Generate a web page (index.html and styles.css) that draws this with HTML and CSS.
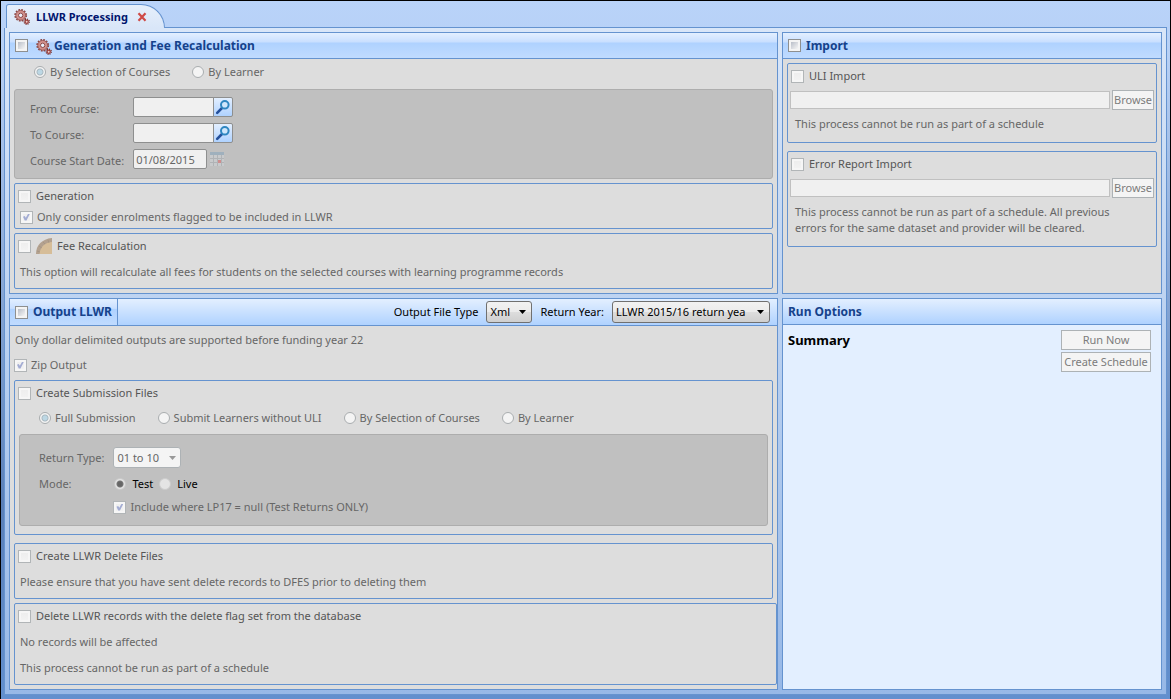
FILE: index.html
```
<!DOCTYPE html>
<html lang="en">
<head>
<meta charset="utf-8">
<title>LLWR Processing</title>
<link rel="stylesheet" href="styles.css">
</head>
<body>
<svg class="defs" aria-hidden="true">
  <symbol id="gears" viewBox="0 0 16 16">
    <circle cx="6.7" cy="6.3" r="5.6" fill="none" stroke="#8a4644" stroke-width="1.6" stroke-dasharray="1.7 1.22"/>
    <circle cx="6.7" cy="6.3" r="3.9" fill="#e9b3ae" stroke="#d08f8a" stroke-width="2.4"/>
    <circle cx="6.7" cy="6.3" r="4.9" fill="none" stroke="#8a4442" stroke-width=".7"/>
    <circle cx="6.7" cy="6.3" r="2.2" fill="#eaf0fb" stroke="#7d3432" stroke-width=".9"/>
    <circle cx="12.7" cy="12.7" r="2.6" fill="none" stroke="#6d2826" stroke-width="1.2" stroke-dasharray="1.1 .94"/>
    <circle cx="12.7" cy="12.7" r="1.6" fill="#f0cfcb" stroke="#9c403c" stroke-width="1.3"/>
  </symbol>
  <symbol id="lens" viewBox="0 0 16 16">
    <path d="M7 9L2.2 13.8" stroke="#24509c" stroke-width="2.6" stroke-linecap="round"/>
    <circle cx="9.8" cy="5.8" r="3.8" fill="#cfe6fb" stroke="#2e86c0" stroke-width="2"/>
  </symbol>
</svg>
<div class="window">
  <nav class="tabs">
    <div class="tab">
      <svg class="icon"><use href="#gears"/></svg>
      <span class="tab-title">LLWR Processing</span>
      <button class="close" aria-label="Close tab"><svg viewBox="0 0 10 10"><path d="M1.5 1.2L8.5 8.8M8.5 1.2L1.5 8.8" stroke="#cf4a46" stroke-width="2.2"/></svg></button>
    </div>
    <div class="tab-rest"></div>
  </nav>
  <main class="content">
    <section class="panel">
      <header class="panel-head glossy">
        <label class="heading"><input type="checkbox"><svg class="icon head-icon"><use href="#gears"/></svg><span>Generation and Fee Recalculation</span></label>
      </header>
      <div class="panel-body">
        <div class="radios radios-top">
          <label><input type="radio" name="scope" checked disabled>By Selection of Courses</label>
          <label><input type="radio" name="scope" disabled>By Learner</label>
        </div>
        <div class="well course-form">
          <label for="from">From Course:</label>
          <div class="field"><input class="text lookup" id="from" type="text" disabled><button class="find" aria-label="Find from course"><svg><use href="#lens"/></svg></button></div>
          <label for="to">To Course:</label>
          <div class="field"><input class="text lookup" id="to" type="text" disabled><button class="find" aria-label="Find to course"><svg><use href="#lens"/></svg></button></div>
          <label for="start">Course Start Date:</label>
          <div class="field"><input class="text date" id="start" type="text" value="01/08/2015" disabled><button class="calendar" aria-label="Pick date" disabled><svg viewBox="0 0 14 14"><path fill="#c8cacc" d="M0 0h14v14H0z"/><path fill="#9fb0bd" d="M0 0h14v3H0z"/><path d="M0 6.5h14M0 10.5h14M3.5 3v11M7.5 3v11M11.5 3v11" stroke="#b0b3b6" fill="none"/><path fill="#cf8d8d" d="M8 8h3v3H8z"/></svg></button></div>
        </div>
        <div class="group gap-s">
          <label class="title"><input type="checkbox" disabled>Generation</label>
          <label class="sub check"><input type="checkbox" checked disabled>Only consider enrolments flagged to be included in LLWR</label>
        </div>
        <div class="group gap-s">
          <label class="title"><input type="checkbox" disabled><svg class="fee" viewBox="0 0 16 16"><path d="M0 16C0 7 6 1 16 0V16Z" fill="#b3a18f"/><path d="M3.5 16C4 9 9 4.5 16 4V16Z" fill="#d6bd98"/><path d="M1 13l3 1M3 8l3 2M7 4l2 2M12 2l1 3" stroke="#a08e7c" stroke-width=".6"/></svg>Fee Recalculation</label>
          <p class="note">This option will recalculate all fees for students on the selected courses with learning programme records</p>
        </div>
      </div>
    </section>

    <section class="panel">
      <header class="panel-head glossy">
        <label class="heading"><input type="checkbox"><span>Import</span></label>
      </header>
      <div class="panel-body import">
        <div class="group">
          <label class="title"><input type="checkbox" disabled>ULI Import</label>
          <div class="file"><input class="text" type="text" aria-label="ULI file" disabled><button class="btn" disabled>Browse</button></div>
          <p class="note">This process cannot be run as part of a schedule</p>
        </div>
        <div class="group">
          <label class="title"><input type="checkbox" disabled>Error Report Import</label>
          <div class="file"><input class="text" type="text" aria-label="Error report file" disabled><button class="btn" disabled>Browse</button></div>
          <p class="note">This process cannot be run as part of a schedule. All previous errors for the same dataset and provider will be cleared.</p>
        </div>
      </div>
    </section>

    <section class="panel">
      <header class="panel-head output-head">
        <label class="heading boxed glossy"><input type="checkbox"><span>Output LLWR</span></label>
        <div class="options">
          <label for="type">Output File Type</label>
          <select id="type" class="type"><option>Xml</option></select>
          <label for="year">Return Year:</label>
          <select id="year" class="year"><option>LLWR 2015/16 return yea</option></select>
        </div>
      </header>
      <div class="panel-body output">
        <p class="lead">Only dollar delimited outputs are supported before funding year 22</p>
        <label class="check zip"><input type="checkbox" checked disabled>Zip Output</label>
        <div class="group submission">
          <label class="title"><input type="checkbox" disabled>Create Submission Files</label>
          <div class="radios">
            <label><input type="radio" name="files" checked disabled>Full Submission</label>
            <label><input type="radio" name="files" disabled>Submit Learners without ULI</label>
            <label><input type="radio" name="files" disabled>By Selection of Courses</label>
            <label><input type="radio" name="files" disabled>By Learner</label>
          </div>
          <div class="well mode-form">
            <label for="ret">Return Type:</label>
            <div class="field"><select id="ret" class="ret" disabled><option>01 to 10</option></select></div>
            <span>Mode:</span>
            <div class="modes">
              <label><input class="flat" type="radio" name="mode" checked disabled>Test</label>
              <label><input class="flat" type="radio" name="mode" disabled>Live</label>
            </div>
            <label class="check include"><input type="checkbox" checked disabled>Include where LP17 = null (Test Returns ONLY)</label>
          </div>
        </div>
        <div class="group gap-l">
          <label class="title"><input type="checkbox" disabled>Create LLWR Delete Files</label>
          <p class="note">Please ensure that you have sent delete records to DFES prior to deleting them</p>
        </div>
        <div class="group gap-s wide">
          <label class="title"><input type="checkbox" disabled>Delete LLWR records with the delete flag set from the database</label>
          <p class="note">No records will be affected</p>
          <p class="note">This process cannot be run as part of a schedule</p>
        </div>
      </div>
    </section>

    <section class="panel run">
      <header class="panel-head"><h2 class="heading">Run Options</h2></header>
      <div class="run-body">
        <h3 class="summary">Summary</h3>
        <div class="actions">
          <button class="btn" disabled>Run Now</button>
          <button class="btn" disabled>Create Schedule</button>
        </div>
      </div>
    </section>
  </main>
</div>
</body>
</html>
```
FILE: styles.css
```
* { box-sizing: border-box; }

body {
  margin: 0;
  font: 11px/16px "Noto Sans", "Open Sans", sans-serif;
  color: #666;
}

h2, h3, p { margin: 0; }
input, button, select { font: inherit; margin: 0; padding: 0; }
.defs { position: absolute; width: 0; height: 0; }

.window {
  min-height: 100vh;
  display: flex;
  flex-direction: column;
  border: 1px solid #000;
  padding: 0 3px 4px;
  background: linear-gradient(#b9d3f9 0, #b7d0f5 8%, #5a80b9 72%, #628fce 100%);
}

/* Tab strip */
.tabs { display: flex; align-items: flex-end; height: 27px; }
.tab {
  display: flex;
  align-items: center;
  height: 24px;
  margin-left: 2px;
  padding: 0 17px 0 7px;
  border: 1px solid #6593cf;
  border-bottom: 0;
  border-radius: 3px 26px 0 0;
  background: linear-gradient(#e6effb, #d9e6f8);
}
.tab-rest { flex: 1; border-bottom: 1px solid #6593cf; }
.tab-title { margin-left: 6px; color: #00156e; font-weight: 700; }
.icon { width: 16px; height: 16px; flex: none; }
.close { width: 10px; height: 10px; margin-left: 9px; border: 0; background: none; }
.close svg { display: block; width: 10px; height: 10px; }

.content {
  flex: 1;
  display: grid;
  grid-template-columns: minmax(0, 769fr) minmax(0, 380fr);
  grid-template-rows: auto 1fr;
  gap: 4px;
  padding: 4px;
  border: 1px solid #6593cf;
  border-top: 0;
  background: linear-gradient(#d9e6f8, #97b8e7);
}

/* Panels */
.panel {
  display: flex;
  flex-direction: column;
  border: 1px solid #6593cf;
  background: #ddd;
}
.panel-head {
  display: flex;
  align-items: center;
  height: 26px;
  padding: 0 5px;
  border-bottom: 1px solid #6593cf;
  background: linear-gradient(#e3efff, #afd2ff);
}
.glossy { background: linear-gradient(#e3efff 0, #c9dfff 36%, #afd2ff 40%, #c0dbff 100%); }
.heading {
  display: flex;
  align-items: center;
  color: #15428b;
  font-size: 12px;
  font-weight: 700;
}
.heading input { margin-right: 5px; }
.head-icon { margin: 3px 2px 0 3px; }
.panel-body { padding: 4px; }

label { display: flex; align-items: center; }

/* Tick boxes and radio buttons */
input[type="checkbox"] {
  appearance: none;
  flex: none;
  width: 13px;
  height: 13px;
  border: 1px solid #8e8f8f;
  background: linear-gradient(135deg, #b9bec8, #f6f6f6) content-box, #f4f4f4;
  padding: 2px;
}
input[type="checkbox"]:disabled {
  border-color: #b1b5b7;
  background: linear-gradient(#eee, #f2f2f2) content-box, #f6f6f6;
}
input[type="checkbox"]:checked::before {
  content: "";
  display: block;
  width: 7px;
  height: 7px;
  background: #a3acd3;
  clip-path: polygon(0 45%, 25% 35%, 40% 60%, 75% 0, 100% 0, 50% 100%, 25% 100%);
}
input[type="radio"] {
  appearance: none;
  flex: none;
  width: 12px;
  height: 12px;
  border: 1px solid #a9adaf;
  border-radius: 50%;
  background: #f4f4f4;
}
input[type="radio"]:checked {
  background: radial-gradient(circle, #bcd7e4 0 2px, #a9b8c0 3px, #f4f4f4 4px);
}
input[type="radio"].flat { border-color: #ccc; background: #e4e4e4; }
input[type="radio"].flat:checked { background: radial-gradient(circle, #666 0 2px, #777 3px, #e4e4e4 4px); }

.radios { display: flex; gap: 22px; }
.radios input { margin-right: 4px; }
.radios-top { padding: 1px 20px 9px; }

/* Boxes */
.well {
  display: grid;
  grid-template-columns: max-content 1fr;
  align-items: center;
  border: 1px solid #adadad;
  border-radius: 3px;
  background: #c0c0c0;
}
.course-form { padding: 7px 15px 9px; gap: 6px 9px; }
.course-form > label { padding-top: 3px; }
.group { border: 1px solid #6593cf; border-radius: 2px; padding: 4px 5px 8px; }
.gap-s { margin-top: 4px; }
.gap-l { margin-top: 8px; }
.title { color: #555; margin-left: -2px; }
.title input { margin-right: 5px; }
.check input { margin-right: 4px; }
.sub { margin: 5px 0 -5px; }
.fee { width: 16px; height: 16px; margin-right: 5px; }
.note { margin-top: 10px; }

.field { display: flex; align-items: center; }
.text {
  height: 20px;
  min-width: 0;
  border: 1px solid #8e8f8f;
  border-radius: 2px;
  background: #f0f0f0;
  color: #666;
}
.lookup { width: 81px; border-radius: 2px 0 0 2px; }
.date { width: 74px; padding-left: 2px; }
.find {
  width: 20px;
  height: 20px;
  margin-left: -1px;
  border: 1px solid #8e8f8f;
  border-radius: 0 2px 2px 0;
  background: linear-gradient(#e3efff, #afd2ff);
}
.find svg { display: block; width: 16px; height: 16px; margin: 0 auto; }
.calendar { width: 14px; height: 14px; margin-left: 3px; border: 0; background: none; }
.calendar svg { display: block; width: 14px; height: 14px; }

.btn {
  height: 20px;
  border: 1px solid #adb2b5;
  background: #f4f4f4;
  color: #7c7c7c;
  white-space: nowrap;
}

/* Import */
.import .group { padding: 4px 2px 10px; }
.import .group + .group { margin-top: 8px; }
.import .title { margin-left: 1px; }
.import .note { margin: 6px 5px 0; padding-right: 20px; }
.file { display: flex; align-items: center; gap: 2px; margin-top: 6px; }
.file .text { flex: 1; height: 18px; border-color: #c0c0c0; border-radius: 0; }
.file .btn { width: 42px; }

/* Output */
.output-head { height: 27px; padding: 0 7px 0 0; justify-content: space-between; }
.boxed { align-self: stretch; padding: 0 5px; border-right: 1px solid #6593cf; }
.options { display: flex; align-items: center; gap: 8px; color: #000; }
select {
  appearance: none;
  height: 22px;
  padding: 0 3px;
  border: 1px solid #707070;
  border-radius: 3px;
  color: #000;
  background:
    url("data:image/svg+xml,%3Csvg xmlns='http://www.w3.org/2000/svg' width='7' height='4'%3E%3Cpath d='M0 0h7L3.500 4z'/%3E%3C/svg%3E") right 5px center no-repeat,
    linear-gradient(#f2f2f2 0, #ebebeb 50%, #ddd 50%, #cfcfcf 100%);
}
.type { width: 46px; }
.year { width: 158px; }
.ret {
  width: 68px;
  height: 21px;
  opacity: 1;
  border-color: #adb2b5;
  color: #666;
  background:
    url("data:image/svg+xml,%3Csvg xmlns='http://www.w3.org/2000/svg' width='7' height='4'%3E%3Cpath fill='%23999' d='M0 0h7L3.500 4z'/%3E%3C/svg%3E") right 4px center no-repeat,
    #f4f4f4;
}
.lead { padding: 2px 1px 0; }
.zip { margin: 9px 0 7px; }
.submission .radios { margin: 9px 19px 8px; }
.mode-form { padding: 12px 19px 10px; margin: 0 -1px; gap: 8px 9px; }
.modes { display: flex; gap: 5px; color: #000; }
.modes input { margin: 0 6px 0 1px; }
.include { grid-column: 2; margin-top: -1px; }
.wide { margin-right: -4px; }

/* Run options */
.run { background: #e3efff; }
.run-body { display: flex; justify-content: space-between; padding: 5px 10px 5px 5px; }
.summary { padding-top: 1px; color: #000; font-size: 13px; font-weight: 700; line-height: 18px; }
.actions { display: flex; flex-direction: column; gap: 2px; width: 90px; }
```
